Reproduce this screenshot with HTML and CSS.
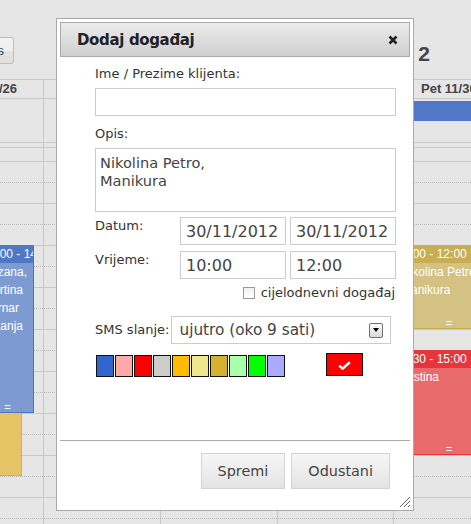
FILE: index.html
```html
<!DOCTYPE html>
<html lang="hr">
<head>
<meta charset="utf-8">
<title>Kalendar</title>
<link rel="stylesheet" href="styles.css">
</head>
<body>
<div class="cal">
  <div class="toolbar">
    <span class="tb-btn">s</span>
    <span class="tb-title">2</span>
  </div>
  <div class="row head">
    <div class="hc hc1">/26</div><div class="hc"></div><div class="hc"></div><div class="hc"></div><div class="hc hc5">Pet 11/30</div>
  </div>
  <div class="row allday">
    <div></div><div></div><div></div><div></div><div><div class="ad-event"></div></div>
  </div>
  <div class="row divider">
    <div></div><div></div><div></div><div></div><div></div>
  </div>
  <div class="slots">
    <div class="slot first"></div>
    <div class="slot half"></div><div class="slot"></div>
    <div class="slot half"></div><div class="slot"></div>
    <div class="slot half"></div><div class="slot"></div>
    <div class="slot half"></div><div class="slot"></div>
    <div class="slot half"></div><div class="slot"></div>
    <div class="slot half"></div><div class="slot"></div>
    <div class="slot half"></div><div class="slot"></div>
    <div class="slot half"></div><div class="slot"></div>
    <div class="slot half"></div><div class="slot"></div>

    <div class="ev ev-blue">
      <div class="ev-time">10:00 - 14:00</div>
      <div class="ev-title">Suzana, Martina Bernar Bojanja</div>
      <div class="ev-grip">=</div>
    </div>
    <div class="ev ev-yellow"></div>
    <div class="ev ev-tan">
      <div class="ev-time">10:00 - 12:00</div>
      <div class="ev-title">Nikolina Petro, Manikura</div>
      <div class="ev-grip">=</div>
    </div>
    <div class="ev ev-red">
      <div class="ev-time">12:30 - 15:00</div>
      <div class="ev-title">Justina</div>
      <div class="ev-grip">=</div>
    </div>
  </div>
</div>

<div class="dlg">
  <div class="dlg-title">
    <span>Dodaj događaj</span>
    <svg class="dlg-close" width="10" height="10" viewBox="0 0 10 10"><path d="M1.5 1.5 L8.5 8.5 M8.5 1.5 L1.5 8.5" stroke="#222" stroke-width="2.6" fill="none"/></svg>
  </div>
  <div class="dlg-body">
    <div class="lbl">Ime / Prezime klijenta:</div>
    <input class="inp inp-name" type="text">
    <div class="lbl lbl-opis">Opis:</div>
    <textarea class="ta">Nikolina Petro,
Manikura</textarea>
    <div class="pair pair-date">
      <span class="lbl">Datum:</span>
      <input class="inp" type="text" value="30/11/2012">
      <input class="inp" type="text" value="30/11/2012">
    </div>
    <div class="pair pair-time">
      <span class="lbl">Vrijeme:</span>
      <input class="inp" type="text" value="10:00">
      <input class="inp" type="text" value="12:00">
    </div>
    <label class="chk-row"><input class="chk" type="checkbox"><span>cijelodnevni događaj</span></label>
    <div class="sms">
      <span class="lbl">SMS slanje:</span>
      <div class="sel"><span>ujutro (oko 9 sati)</span><span class="sel-arrow"></span></div>
    </div>
    <div class="colors">
      <span class="sw" style="background:#3366cc"></span>
      <span class="sw" style="background:#ffaaaa"></span>
      <span class="sw" style="background:#ff0000"></span>
      <span class="sw" style="background:#cccccc"></span>
      <span class="sw" style="background:#ffbb00"></span>
      <span class="sw" style="background:#f0e68c"></span>
      <span class="sw" style="background:#d4b12f"></span>
      <span class="sw" style="background:#aaffaa"></span>
      <span class="sw" style="background:#00ff00"></span>
      <span class="sw" style="background:#aaaaff"></span>
      <span class="picked">
        <svg width="13" height="9" viewBox="0 0 13 9"><path d="M1.2 4.6 L4.6 7.6 L11.8 1.2" stroke="#fff" stroke-width="2.6" fill="none"/></svg>
      </span>
    </div>
  </div>
  <div class="dlg-foot">
    <button class="btn" type="button">Spremi</button>
    <button class="btn" type="button">Odustani</button>
  </div>
  <svg class="grip" width="12" height="12" viewBox="0 0 12 12"><path d="M11 1 L1 11 M11 5 L5 11 M11 9 L9 11" stroke="#666" stroke-width="1" fill="none"/></svg>
</div>
</body>
</html>
```

FILE: styles.css
```css
* { box-sizing: border-box; }
html, body { margin: 0; }
body {
  width: 471px;
  height: 524px;
  overflow: hidden;
  position: relative;
  background: #e6e6e6;
  font-family: "Liberation Sans", Arial, sans-serif;
}

/* calendar behind the dialog */
.toolbar {
  height: 79px;
  display: flex;
  align-items: flex-start;
  justify-content: space-between;
}
.tb-btn {
  margin-top: 37px;
  margin-left: -12px;
  width: 26px;
  height: 27px;
  border: 1px solid #bdbdbd;
  border-radius: 0 3px 3px 0;
  background: linear-gradient(#f2f2f2 0, #f0f0f0 50%, #e2e2e2 50%, #e0e0e0 100%);
  font-size: 13px;
  line-height: 25px;
  color: #444;
  text-align: right;
  padding-right: 9px;
}
.tb-title {
  margin-top: 42px;
  margin-right: 41px;
  font-size: 21px;
  line-height: 24px;
  font-weight: bold;
  color: #444;
}
.row {
  display: grid;
  grid-template-columns: 43px 117px 117px 116px 1fr;
}
.row > div + div { border-left: 1px solid #c9c9c9; }
.head {
  height: 20px;
  border-top: 1px solid #c9c9c9;
  border-bottom: 1px solid #c9c9c9;
  font-size: 13px;
  line-height: 18px;
  font-weight: bold;
  color: #444;
  white-space: nowrap;
}
.hc1 { text-indent: -1px; }
.hc5 { padding-left: 27px; }
.allday {
  height: 44px;
  border-bottom: 1px solid #c9c9c9;
}
.ad-event {
  margin: 2px 0 0 1px;
  height: 20px;
  background: #5078c6;
}
.divider {
  height: 5px;
  border-bottom: 1px solid #c9c9c9;
}
.slots {
  position: relative;
  height: 380px;
  background-image:
    linear-gradient(#c9c9c9, #c9c9c9),
    linear-gradient(#c9c9c9, #c9c9c9),
    linear-gradient(#c9c9c9, #c9c9c9),
    linear-gradient(#c9c9c9, #c9c9c9);
  background-size: 1px 100%;
  background-position: 43px 0, 160px 0, 277px 0, 393px 0;
  background-repeat: no-repeat;
}
.slot {
  height: 21px;
  border-bottom: 1px solid #c9c9c9;
}
.slot.first { height: 14px; }
.slot.half { border-bottom: 1px dotted #b9b9b9; }

.ev {
  position: absolute;
  overflow: hidden;
  color: #fff;
  font-size: 12px;
  line-height: 18px;
  display: flex;
  flex-direction: column;
}
.ev-time { height: 18px; padding-left: 1px; white-space: nowrap; }
.ev-title { flex: 1; padding-left: 1px; }
.ev-grip { height: 9px; line-height: 9px; font-size: 11px; text-align: center; }
.ev-blue {
  left: -18px; top: 97px; width: 52px; height: 168px;
  background: #7e9bd1;
  border-right: 1px solid #4b74c3;
  border-bottom: 1px solid #4b74c3;
}
.ev-blue .ev-time { background: #4f78c5; }
.ev-yellow {
  left: -30px; top: 265px; width: 52px; height: 63px;
  background: #e6c466;
  border-right: 1px solid #d8b24e;
  border-bottom: 1px solid #d8b24e;
}
.ev-tan {
  left: 395px; top: 97px; width: 108px; height: 84px;
  background: #d3c283;
  border-bottom: 1px solid #c6ad4f;
}
.ev-tan .ev-time { background: #c8ae52; }
.ev-tan .ev-title, .ev-red .ev-title { padding-left: 6px; }
.ev-red {
  left: 395px; top: 202px; width: 108px; height: 105px;
  background: #e86a6b;
  border-bottom: 1px solid #e5373b;
}
.ev-red .ev-time { background: #e5373b; }

/* dialog */
.dlg {
  position: absolute;
  left: 56px;
  top: 18px;
  width: 358px;
  height: 493px;
  border: 1px solid #aaaaaa;
  background: #fff;
  padding: 3px;
  display: flex;
  flex-direction: column;
  font-family: "DejaVu Sans", Verdana, sans-serif;
  color: #333;
}
.dlg-title {
  height: 35px;
  flex: none;
  border: 1px solid #aaaaaa;
  background: linear-gradient(#ececec, #cfcfcf);
  display: flex;
  align-items: center;
  justify-content: space-between;
  padding: 0 11px 0 16px;
  font-size: 15px;
  font-weight: bold;
  letter-spacing: -0.35px;
  color: #222;
}
.dlg-close { display: block; }
.dlg-body {
  flex: 1;
  padding: 9px 14px 0 35px;
  display: flex;
  flex-direction: column;
}
.lbl {
  font-size: 13px;
  line-height: 16px;
  color: #333;
}
.inp {
  height: 28px;
  border: 1px solid #cccccc;
  padding: 0 5px;
  font-family: "DejaVu Sans", Verdana, sans-serif;
  font-size: 16px;
  color: #444;
  background: #fff;
  outline: none;
  margin: 0;
  min-width: 0;
  width: 100%;
}
.inp-name { margin-top: 6px; width: 301px; }
.lbl-opis { margin-top: 10px; }
.ta {
  margin-top: 6px;
  width: 301px;
  height: 64px;
  border: 1px solid #cccccc;
  padding: 5px 4px;
  font-family: "DejaVu Sans", Verdana, sans-serif;
  font-size: 14.6px;
  line-height: 18px;
  color: #444;
  resize: none;
  outline: none;
}
.pair {
  display: grid;
  grid-template-columns: 81px 106px 106px;
  column-gap: 4px;
  align-items: start;
}
.pair .lbl { padding-top: 1px; }
.pair-date { margin-top: 5px; }
.pair-time { margin-top: 6px; }
.chk-row {
  margin-top: 6px;
  align-self: flex-end;
  display: flex;
  align-items: center;
  gap: 6px;
  font-size: 13px;
  line-height: 16px;
  color: #333;
  margin-right: 1px;
}
.chk {
  appearance: none;
  -webkit-appearance: none;
  margin: 0;
  width: 12px;
  height: 12px;
  border: 1px solid #9a9a9a;
  background: linear-gradient(#f1f1f1, #fff);
}
.sms {
  margin-top: 15px;
  display: flex;
  align-items: center;
  gap: 2px;
}
.sel {
  width: 220px;
  height: 28px;
  border: 1px solid #cccccc;
  display: flex;
  align-items: center;
  justify-content: space-between;
  padding: 0 7px 0 7px;
  font-size: 15.3px;
  color: #444;
}
.sel-arrow {
  width: 14px;
  height: 15px;
  border: 1px solid #707070;
  border-radius: 2px;
  background: linear-gradient(#ffffff, #d9d9d9);
  display: flex;
  align-items: center;
  justify-content: center;
}
.sel-arrow::after {
  content: "";
  border-left: 3.5px solid transparent;
  border-right: 3.5px solid transparent;
  border-top: 4px solid #000;
}
.colors {
  margin-top: 9px;
  display: flex;
  align-items: flex-start;
  gap: 1px;
  padding-left: 1px;
}
.sw {
  margin-top: 2px;
  width: 18px;
  height: 22px;
  border: 1px solid #111;
}
.picked {
  margin-left: 40px;
  width: 37px;
  height: 23px;
  border: 1px solid #111;
  background: #ff0000;
  display: flex;
  align-items: center;
  justify-content: center;
}
.picked svg { display: block; margin-top: 2px; }
.dlg-foot {
  flex: none;
  height: 67px;
  border-top: 1px solid #aaaaaa;
  padding: 12px 20px 0 0;
  display: flex;
  justify-content: flex-end;
  align-items: flex-start;
  gap: 6px;
}
.btn {
  height: 36px;
  margin: 0;
  border: 1px solid #d3d3d3;
  background: linear-gradient(#f6f6f6 0, #ededed 50%, #e4e4e4 100%);
  font-family: "DejaVu Sans", Verdana, sans-serif;
  font-size: 14.4px;
  color: #444;
  padding: 0 16px;
}
.grip {
  position: absolute;
  right: 2px;
  bottom: 2px;
}
```
